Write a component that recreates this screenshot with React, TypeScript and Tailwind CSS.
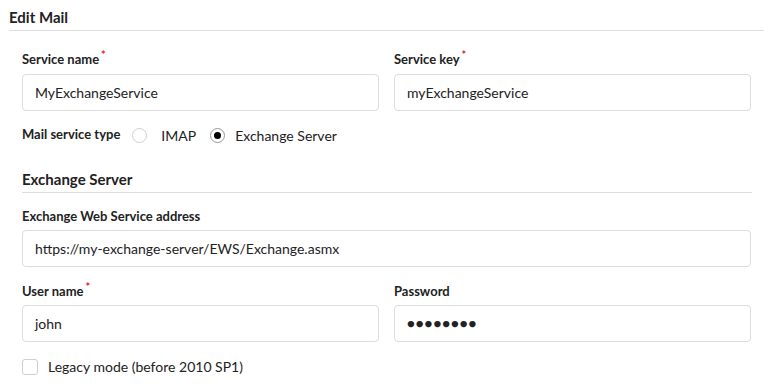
import React from "react";

function Label({ children, required }: { children: React.ReactNode; required?: boolean }) {
  return (
    <div className="flex items-start h-[20px] text-[13px] font-bold text-[#222] leading-[20px]">
      <span>{children}</span>
      {required && <span className="text-[#e0242a] text-[11px] leading-[12px] ml-[2px]">*</span>}
    </div>
  );
}

function Input({ value, password }: { value: string; password?: boolean }) {
  return (
    <div className="h-[37px] border border-[#dcdcdc] rounded-[4px] bg-white flex items-center px-[12px] text-[14px] text-[#222]">
      {password ? (
        <span className="tracking-[1px] text-[13px]">●●●●●●●●</span>
      ) : (
        <span>{value}</span>
      )}
    </div>
  );
}

export default function App() {
  return (
    <div className="bg-white w-[772px] h-[385px] pl-[9px] pr-[8px]" style={{ fontFamily: "Lato, 'Noto Sans', sans-serif" }}>
      <div className="pt-[6px] h-[31px] border-b border-[#dedede] text-[15px] font-bold text-[#222] leading-[22px]">
        Edit Mail
      </div>
      <div className="pl-[13px] pr-[12px]">
        <div className="grid grid-cols-2 gap-x-[15px] pt-[18px] pr-[1px]">
          <div>
            <Label required>Service name</Label>
            <div className="mt-[5px]"><Input value="MyExchangeService" /></div>
          </div>
          <div>
            <Label required>Service key</Label>
            <div className="mt-[5px]"><Input value="myExchangeService" /></div>
          </div>
        </div>
        <div className="flex items-center h-[20px] mt-[14px] text-[14px] text-[#222]">
          <span className="text-[13px] font-bold mr-[12px]">Mail service type</span>
          <span className="w-[15px] h-[15px] rounded-full border border-[#cfcfcf] mr-[14px]" />
          <span className="mr-[14px]">IMAP</span>
          <span className="w-[15px] h-[15px] rounded-full border border-[#999] flex items-center justify-center mr-[10px]">
            <span className="w-[7px] h-[7px] rounded-full bg-black" />
          </span>
          <span>Exchange Server</span>
        </div>
        <div className="mt-[16px] h-[32px] pt-[7px] border-b border-[#dedede] text-[15px] font-bold text-[#222] leading-[22px]">
          Exchange Server
        </div>
        <div className="pt-[13px]">
          <Label>Exchange Web Service address</Label>
          <div className="mt-[4px] pr-[1px]"><Input value="https://my-exchange-server/EWS/Exchange.asmx" /></div>
        </div>
        <div className="grid grid-cols-2 gap-x-[15px] pt-[14px] pr-[1px]">
          <div>
            <Label required>User name</Label>
            <div className="mt-[4px]"><Input value="john" /></div>
          </div>
          <div>
            <Label>Password</Label>
            <div className="mt-[4px]"><Input value="" password /></div>
          </div>
        </div>
        <div className="flex items-center mt-[14px] text-[14px] text-[#222]">
          <span className="w-[16px] h-[16px] rounded-[3px] border border-[#cfcfcf] mr-[10px]" />
          <span>Legacy mode (before 2010 SP1)</span>
        </div>
      </div>
    </div>
  );
}
